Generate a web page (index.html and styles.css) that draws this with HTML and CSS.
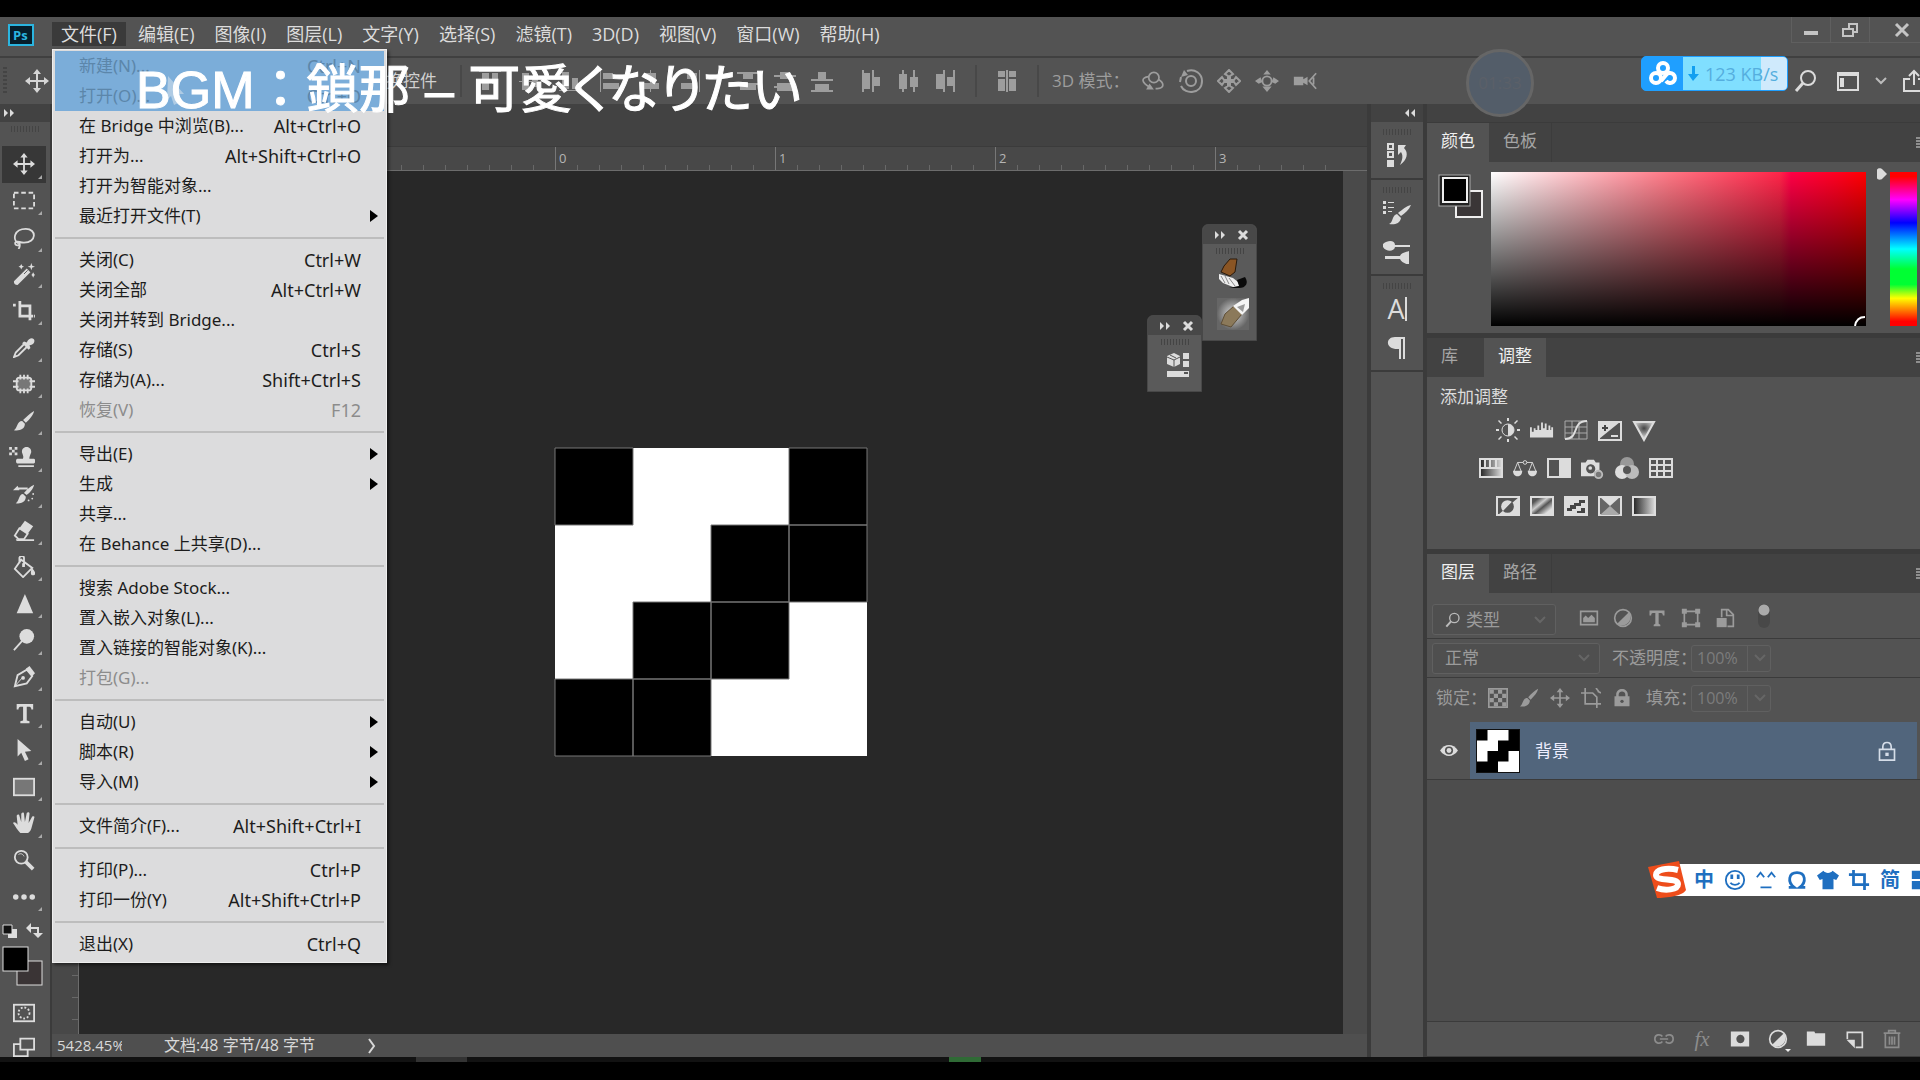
FILE: index.html
```html
<!DOCTYPE html>
<html lang="zh-CN">
<head>
<meta charset="utf-8">
<title>Photoshop</title>
<link rel="stylesheet" href="styles.css">
</head>
<body>
<svg class="defs" aria-hidden="true">
  <defs>
    <linearGradient id="gh"><stop offset="0" stop-color="#222"/><stop offset="1" stop-color="#ddd"/></linearGradient>
    <linearGradient id="gd" x1="0" y1="0" x2="1" y2="1"><stop offset=".2" stop-color="#555"/><stop offset=".4" stop-color="#ccc"/><stop offset=".55" stop-color="#555"/><stop offset=".8" stop-color="#ddd"/></linearGradient>
    <radialGradient id="gr" cy=".35"><stop offset="0" stop-color="#444"/><stop offset="1" stop-color="#ccc"/></radialGradient>
    <radialGradient id="glow"><stop offset="0" stop-color="#ddd"/><stop offset="1" stop-color="#666"/></radialGradient>
  </defs>
  <symbol id="i-move" viewBox="0 0 24 24"><path d="M12 0l4 5h-3v6h6V8l5 4-5 4v-3h-6v6h3l-4 5-4-5h3v-6H5v3l-5-4 5-4v3h6V5H8z"/></symbol>
  <symbol id="i-brush" viewBox="0 0 24 24"><path d="M23 1c-1 5-5 9-9 13l-3-3C15 7 19 3 23 1zM10 12l3 3c0 6-6 8-12 7 4-2 3-10 9-10z"/></symbol>
  <symbol id="i-crop" viewBox="0 0 24 24"><path d="M0 4h3v3H0zM6 1h3v15h13v3H6zM6 5h14v17h-3V8H6zM23 16h2v3h-2z"/></symbol>
  <symbol id="i-right" viewBox="0 0 12 8"><path d="M1 0l4 4-4 4zM7 0l4 4-4 4z"/></symbol>
  <symbol id="i-left" viewBox="0 0 12 8"><path d="M5 0L1 4l4 4zM11 0L7 4l4 4z"/></symbol>
  <symbol id="i-x" viewBox="0 0 12 12"><path d="M2 2l8 8M10 2l-8 8" stroke="currentColor" stroke-width="3" fill="none"/></symbol>
  <symbol id="i-chev" viewBox="0 0 12 8"><path d="M1 1l5 5 5-5" stroke="currentColor" stroke-width="2" fill="none"/></symbol>
  <symbol id="i-mag" viewBox="0 0 24 24"><g fill="none" stroke="currentColor"><circle cx="14" cy="9" r="7" stroke-width="2"/><path d="M9 14l-7 8" stroke-width="3"/></g></symbol>
  <symbol id="i-lock" viewBox="0 0 24 24"><path d="M3 10h2V8c0-9 14-9 14 0v2h2v12H3zM8 10h8V8c0-5-8-5-8 0z" fill-rule="evenodd"/><circle cx="12" cy="16" r="2" fill="#535353"/></symbol>
  <symbol id="i-half" viewBox="0 0 24 24"><circle cx="12" cy="12" r="10" fill="none" stroke="currentColor" stroke-width="2"/><path d="M19 5A10 10 0 0 1 5 19z"/></symbol>
  <symbol id="i-panel" viewBox="0 0 8 12"><path d="M0 1h8M0 4h8M0 7h8M0 10h8" stroke="currentColor"/></symbol>
</svg>

<header class="menubar">
  <svg class="pslogo" viewBox="0 0 26 22" role="img" aria-label="Photoshop"><rect x="1" y="1" width="24" height="20" fill="#061e2b" stroke="#2bb5e0" stroke-width="2"/><text x="5" y="16" class="pstext">Ps</text></svg>
  <nav class="menus" aria-label="主菜单">
    <div class="menuwrap">
      <button class="menu open">文件(F)</button>
      <ul class="dropdown" role="menu">
        <li><button class="item hot"><span>新建(N)...</span><kbd>Ctrl+N</kbd></button></li>
        <li><button class="item hot"><span>打开(O)...</span><kbd>Ctrl+O</kbd></button></li>
        <li><button class="item"><span>在 Bridge 中浏览(B)...</span><kbd>Alt+Ctrl+O</kbd></button></li>
        <li><button class="item"><span>打开为...</span><kbd>Alt+Shift+Ctrl+O</kbd></button></li>
        <li><button class="item"><span>打开为智能对象...</span></button></li>
        <li><button class="item sub"><span>最近打开文件(T)</span></button></li>
        <li class="sep"></li>
        <li><button class="item"><span>关闭(C)</span><kbd>Ctrl+W</kbd></button></li>
        <li><button class="item"><span>关闭全部</span><kbd>Alt+Ctrl+W</kbd></button></li>
        <li><button class="item"><span>关闭并转到 Bridge...</span></button></li>
        <li><button class="item"><span>存储(S)</span><kbd>Ctrl+S</kbd></button></li>
        <li><button class="item"><span>存储为(A)...</span><kbd>Shift+Ctrl+S</kbd></button></li>
        <li><button class="item" disabled><span>恢复(V)</span><kbd>F12</kbd></button></li>
        <li class="sep"></li>
        <li><button class="item sub"><span>导出(E)</span></button></li>
        <li><button class="item sub"><span>生成</span></button></li>
        <li><button class="item"><span>共享...</span></button></li>
        <li><button class="item"><span>在 Behance 上共享(D)...</span></button></li>
        <li class="sep"></li>
        <li><button class="item"><span>搜索 Adobe Stock...</span></button></li>
        <li><button class="item"><span>置入嵌入对象(L)...</span></button></li>
        <li><button class="item"><span>置入链接的智能对象(K)...</span></button></li>
        <li><button class="item" disabled><span>打包(G)...</span></button></li>
        <li class="sep"></li>
        <li><button class="item sub"><span>自动(U)</span></button></li>
        <li><button class="item sub"><span>脚本(R)</span></button></li>
        <li><button class="item sub"><span>导入(M)</span></button></li>
        <li class="sep"></li>
        <li><button class="item"><span>文件简介(F)...</span><kbd>Alt+Shift+Ctrl+I</kbd></button></li>
        <li class="sep"></li>
        <li><button class="item"><span>打印(P)...</span><kbd>Ctrl+P</kbd></button></li>
        <li><button class="item"><span>打印一份(Y)</span><kbd>Alt+Shift+Ctrl+P</kbd></button></li>
        <li class="sep"></li>
        <li><button class="item"><span>退出(X)</span><kbd>Ctrl+Q</kbd></button></li>
      </ul>
    </div>
    <button class="menu">编辑(E)</button>
    <button class="menu">图像(I)</button>
    <button class="menu">图层(L)</button>
    <button class="menu">文字(Y)</button>
    <button class="menu">选择(S)</button>
    <button class="menu">滤镜(T)</button>
    <button class="menu">3D(D)</button>
    <button class="menu">视图(V)</button>
    <button class="menu">窗口(W)</button>
    <button class="menu">帮助(H)</button>
  </nav>
  <div class="winctl">
    <button aria-label="最小化"><svg viewBox="0 0 16 16"><path d="M1 9h14v4H1z"/></svg></button>
    <button aria-label="还原"><svg viewBox="0 0 16 16"><path d="M6 1h10v10h-4v4H0V6h6zM8 3v3h4v3h2V3zM2 8v5h8V8z" fill-rule="evenodd"/></svg></button>
    <button class="close" aria-label="关闭"><svg viewBox="0 0 16 16"><path d="M2 2l12 12M14 2L2 14" stroke="currentColor" stroke-width="3"/></svg></button>
  </div>
</header>

<section class="options" aria-label="工具选项">
  <span class="grip-v"></span>
  <svg class="movebig"><use href="#i-move"/></svg>
  <label class="transform"><input type="checkbox">显示变换控件</label>
  <div class="group g1">
    <button aria-label="顶对齐"><svg viewBox="0 0 24 24"><path d="M1 2h22v1H1zM4 4h7v17H4zM14 4h6v11h-6z"/></svg></button>
    <button aria-label="垂直居中"><svg viewBox="0 0 24 24"><path d="M1 12h22v1H1zM4 4h7v17H4zM14 7h6v11h-6z"/></svg></button>
    <button aria-label="底对齐"><svg viewBox="0 0 24 24"><path d="M1 21h22v1H1zM4 3h7v17H4zM14 9h6v11h-6z"/></svg></button>
    <button aria-label="左对齐"><svg viewBox="0 0 24 24"><path d="M2 1h1v22H2zM5 4h10v6H5zM5 14h16v6H5z"/></svg></button>
    <button aria-label="水平居中"><svg viewBox="0 0 24 24"><path d="M12 1h1v22h-1zM7 4h11v6H7zM4 14h17v6H4z"/></svg></button>
    <button aria-label="右对齐"><svg viewBox="0 0 24 24"><path d="M21 1h1v22h-1zM9 4h10v6H9zM3 14h16v6H3z"/></svg></button>
  </div>
  <div class="group g2">
    <button aria-label="按顶分布"><svg viewBox="0 0 24 24"><path d="M1 3h22v2H1zM7 5h10v5H7zM1 14h22v2H1zM4 16h16v5H4z"/></svg></button>
    <button aria-label="垂直分布"><svg viewBox="0 0 24 24"><path d="M1 6h22v2H1zM7 3h10v7H7zM1 17h22v2H1zM4 14h16v8H4z"/></svg></button>
    <button aria-label="按底分布"><svg viewBox="0 0 24 24"><path d="M1 10h22v2H1zM8 3h8v7H8zM1 21h22v2H1zM5 15h14v6H5z"/></svg></button>
  </div>
  <div class="group g2b">
    <button aria-label="按左分布"><svg viewBox="0 0 24 24"><path d="M3 1h2v22H3zM5 4h6v16H5zM13 1h2v22h-2zM15 8h6v9h-6z"/></svg></button>
    <button aria-label="水平分布"><svg viewBox="0 0 24 24"><path d="M6 1h2v22H6zM3 5h8v15H3zM17 1h2v22h-2zM14 8h8v10h-8z"/></svg></button>
    <button aria-label="按右分布"><svg viewBox="0 0 24 24"><path d="M10 1h2v22h-2zM3 5h7v15H3zM20 1h2v22h-2zM14 8h6v9h-6z"/></svg></button>
  </div>
  <div class="group g3">
    <button aria-label="自动对齐图层"><svg viewBox="0 0 24 24"><path d="M3 2h7v6H3zM14 2h7v6h-7zM3 10h7v12H3zM14 10h7v12h-7zM11 1h2v22h-2z"/></svg></button>
  </div>
  <div class="group g4">
    <span class="modelabel">3D 模式：</span>
    <button aria-label="环绕"><svg viewBox="0 0 28 24"><g fill="none" stroke="currentColor" stroke-width="2"><circle cx="15" cy="8" r="6"/><path d="M9 7c-10 1-8 7 1 12M20 10c7 4 8 10-1 11h-2"/></g><path d="M6 22l4-7 5 7z"/></svg></button>
    <button aria-label="滚动"><svg viewBox="0 0 24 24"><g fill="none" stroke="currentColor" stroke-width="2"><circle cx="12" cy="12" r="5"/><path d="M8 2c8-3 15 3 15 10 0 13-17 14-21 5"/><path d="M1 13l1-5"/></g><path d="M2 8l3-7 4 5z"/></svg></button>
    <button aria-label="拖动"><svg viewBox="0 0 24 24"><path d="M12 1l4 4-3 2v4h4l2-3 4 4-4 4-2-3h-4v4l3 2-4 4-4-4 3-2v-4H7l-2 3-4-4 4-4 2 3h4V7L8 5z" fill="none" stroke="currentColor" stroke-width="2"/></svg></button>
    <button aria-label="滑动"><svg viewBox="0 0 26 24"><circle cx="13" cy="12" r="5" fill="none" stroke="currentColor" stroke-width="2"/><path d="M13 0l4 5H9zM13 24l-5-6h10zM0 12l6-4 2 5-4 2zM26 12l-6-4-2 5 4 2z"/></svg></button>
    <button aria-label="缩放"><svg viewBox="0 0 28 24"><path d="M1 7h11v3l5-3v10l-5-3v3H1z"/><path d="M27 3l-8 9 8 9M24 8v8" fill="none" stroke="currentColor" stroke-width="2"/></svg></button>
  </div>
  <div class="group g5">
    <button aria-label="搜索"><svg viewBox="0 0 24 24"><use href="#i-mag"/></svg></button>
    <button aria-label="工作区"><svg viewBox="0 0 24 24"><path d="M1 3h22v19H1zM3 7v13h18V7zM4 9h4v9H4z" fill-rule="evenodd"/></svg></button>
    <svg class="chev"><use href="#i-chev"/></svg>
    <button class="share" aria-label="共享"><svg viewBox="0 0 24 24"><path d="M8 10H2v12h20V10h-6M12 16V2M7 7l5-5 5 5" fill="none" stroke="currentColor" stroke-width="2"/></svg></button>
  </div>
</section>

<main class="workspace">
  <aside class="toolbar" aria-label="工具">
    <div class="dockhead"><svg class="arrows"><use href="#i-right"/></svg></div>
    <div class="gripbox"><span class="grip"></span></div>
    <div class="tools">
      <button class="tool active" aria-label="移动"><svg><use href="#i-move"/></svg></button>
      <button class="tool" aria-label="选框"><svg viewBox="0 0 24 24"><rect x="1" y="3" width="22" height="17" fill="none" stroke="currentColor" stroke-width="2" stroke-dasharray="5 3"/></svg></button>
      <button class="tool" aria-label="套索"><svg viewBox="0 0 24 24"><path d="M6 18C-1 14 1 2 14 2c12 0 12 15-2 15-4 0-5-1-7-1-4 0-3 4 0 4s3-4 0-4c3 1 3 5 1 8" fill="none" stroke="currentColor" stroke-width="2"/></svg></button>
      <button class="tool" aria-label="魔棒"><svg viewBox="0 0 24 24"><path d="M1 20L15 6l4 4L5 24c-3 0-4-1-4-4zM9 1l1 2 2 1-2 1-1 2-1-2-2-1 2-1zM20 0l1 3 3 1-3 1-1 3-1-3-3-1 3-1zM22 10l1 2 1 1-1 1-1 2-1-2-1-1 1-1z"/><path d="M12 12l4-4" stroke="#535353" stroke-width="1"/></svg></button>
      <button class="tool" aria-label="裁剪"><svg><use href="#i-crop"/></svg></button>
      <button class="tool" aria-label="吸管"><svg viewBox="0 0 24 24"><path d="M12 6l3 1c3-7 10-5 8 0-1 2-3 3-5 3l1 3-2 2-7-7z"/><path d="M12 9L3 18l-2 5 5-2 9-9" fill="none" stroke="currentColor" stroke-width="2"/></svg></button>
      <button class="tool" aria-label="修补"><svg viewBox="0 0 24 24"><rect x="4" y="5" width="16" height="14" rx="3" fill="#777" stroke="currentColor" stroke-width="2"/><path d="M8 2v5M12 2v5M16 2v5M8 17v5M12 17v5M16 17v5M0 9h6M0 15h6M18 9h6M18 15h6" stroke="currentColor" stroke-width="2"/></svg></button>
      <button class="tool" aria-label="画笔"><svg><use href="#i-brush"/></svg></button>
      <button class="tool wide" aria-label="图章"><svg viewBox="0 0 28 24"><path d="M14 7c-1-8 11-8 10 0-1 3-2 4-2 7h5c2 0 2 5 0 5H9c-2 0-2-5 0-5h6c1-3 0-4-1-7zM10 21h17v2H10zM0 1h3v3H0zM6 1h3v3H6zM3 4h3v3H3zM0 7h3v3H0zM6 7h3v3H6z"/></svg></button>
      <button class="tool" aria-label="历史记录画笔"><svg viewBox="0 0 24 24"><path d="M23 2c-1 5-5 9-8 11l-3-2c3-4 7-7 11-9zM11 12l3 3c0 6-6 8-11 7 4-2 3-10 8-10zM0 8l5-5 2 5zM5 5h11v2H5z"/><circle cx="17" cy="19" r="1"/><circle cx="21" cy="17" r="1"/><circle cx="22" cy="12" r="1"/></svg></button>
      <button class="tool" aria-label="橡皮擦"><svg viewBox="0 0 24 24"><path d="M13 2l9 6-6 8-9-6zM3 22h20v2H4z"/><path d="M7 10l9 6-4 6H6l-4-4z" fill="none" stroke="currentColor" stroke-width="2"/></svg></button>
      <button class="tool" aria-label="油漆桶"><svg viewBox="0 0 24 24"><path d="M9 4l12 9-10 10-9-9zM7 8V2c1-3 5-2 5 0v8" fill="none" stroke="currentColor" stroke-width="2"/><path d="M20 13c4 2 6 8 2 8s-2-4-2-8zM10 8h3v4h-3z"/></svg></button>
      <button class="tool" aria-label="锐化"><svg viewBox="0 0 24 24"><path d="M13 1l9 21H4z"/></svg></button>
      <button class="tool" aria-label="减淡"><svg viewBox="0 0 24 24"><circle cx="15" cy="8" r="8"/><path d="M10 13L1 23" stroke="currentColor" stroke-width="2"/></svg></button>
      <button class="tool" aria-label="钢笔"><svg viewBox="0 0 24 24"><path d="M2 22l3-12 10-6 6 7-6 8z" fill="none" stroke="currentColor" stroke-width="2"/><path d="M2 22l8-9" stroke="currentColor"/><circle cx="11" cy="13" r="2"/><path d="M14 3l4-3 6 8-3 3z"/></svg></button>
      <button class="tool" aria-label="文字"><svg viewBox="0 0 24 24"><path d="M4 1h18v6h-2c0-2-1-3-2-3h-3v15l3 1v2H8v-2l3-1V4H8C7 4 6 5 6 7H4z"/></svg></button>
      <button class="tool" aria-label="路径选择"><svg viewBox="0 0 24 24"><path d="M5 0l15 13-7 1 4 8-4 2-4-9-4 4z"/></svg></button>
      <button class="tool" aria-label="矩形"><svg viewBox="0 0 24 24"><rect x="1" y="3" width="22" height="18" fill="#777" stroke="currentColor" stroke-width="2"/></svg></button>
      <button class="tool" aria-label="抓手"><svg viewBox="0 0 24 24"><path d="M8 23c-3-3-5-7-8-11 1-2 4 0 5 2L4 4c1-2 3-1 3 0l2 7V2c1-2 3-2 3 0l1 9 2-10c1-1 3-1 3 1l-1 10 4-7c2-1 3 0 2 2l-3 11c-1 3-3 5-4 5z"/></svg></button>
      <button class="tool plain" aria-label="缩放"><svg viewBox="0 0 24 24"><circle cx="9" cy="9" r="7" fill="none" stroke="currentColor" stroke-width="2"/><path d="M14 14l8 8" stroke="currentColor" stroke-width="4"/><path d="M6 6c3-2 5 0 6 2" fill="none" stroke="currentColor"/></svg></button>
      <button class="tool" aria-label="更多"><svg viewBox="0 0 24 24"><circle cx="3" cy="12" r="3"/><circle cx="12" cy="12" r="3"/><circle cx="21" cy="12" r="3"/></svg></button>
    </div>
    <div class="swatchbox">
      <svg viewBox="0 0 50 66" class="swatches"><path d="M8 8h9v9H8z" fill="#ddd"/><path d="M3 4h9v9H3z" fill="#111" stroke="#ddd"/><path d="M30 7h8v7" fill="none" stroke="#ddd" stroke-width="2"/><path d="M31 2v10l-5-5zM33 12h10l-5 5z" fill="#ddd"/><rect x="17" y="40" width="25" height="24" fill="#3a3435" stroke="#ddd"/><rect x="3" y="26" width="25" height="24" fill="#000" stroke="#ddd"/></svg>
    </div>
    <button class="tool plain small" aria-label="快速蒙版"><svg viewBox="0 0 24 24"><rect x="1" y="3" width="22" height="18" fill="none" stroke="currentColor" stroke-width="2"/><circle cx="12" cy="12" r="6" fill="none" stroke="currentColor" stroke-width="2" stroke-dasharray="2 2"/></svg></button>
    <button class="tool plain last" aria-label="屏幕模式"><svg viewBox="0 0 24 24"><path d="M8 4h15v12H8zM8 10H1v13h15v-7" fill="none" stroke="currentColor" stroke-width="2"/></svg></button>
  </aside>

  <section class="doc">
    <div class="tabs-empty"></div>
    <div class="hruler"><span>0</span><span>1</span><span>2</span><span>3</span></div>
    <div class="stage">
      <div class="vruler"></div>
      <div class="canvas">
        <svg class="art" viewBox="0 0 312 308" role="img" aria-label="图像"><path fill="#fff" d="M0 0h312v308H0z"/><path d="M0 0h78v77H0zM234 0h78v77h-78zM156 77h78v77h-78zM234 77h78v77h-78zM78 154h78v77H78zM156 154h78v77h-78zM0 231h78v77H0zM78 231h78v77H78z" fill="#000" stroke="#777"/></svg>
        <div class="float f1">
          <div class="floathead"><svg class="arrows"><use href="#i-right"/></svg><button aria-label="关闭面板"><svg class="x"><use href="#i-x"/></svg></button></div>
          <span class="grip"></span>
          <button aria-label="笔刷"><svg viewBox="0 0 32 32"><path d="M7 8l6-7h7l-2 13-5 4-9-4z" fill="#8a5524" stroke="#2a1a0c"/><path d="M2 16l14 4 10 8-10 1-10-4-4-4z" fill="#eee"/><path d="M4 18l4 7M8 18l4 8M12 20l6 8" stroke="#888"/><path d="M20 22l8-3c4 6 1 11-6 11H12l10-2z" fill="#0a0a0a"/></svg></button>
          <button aria-label="刷子"><svg viewBox="0 0 32 32"><path fill="url(#glow)" d="M0 0h32v32H0z"/><path d="M17 8l8 8-11 13-10-3 4-10z" fill="#8b795a" stroke="#5e4e36"/><path d="M32 0v10l-7 7-9-9 9-6z" fill="#f4f4f4"/><path d="M20 9l8-3-2 8z" fill="#999"/></svg></button>
        </div>
        <div class="float f2">
          <div class="floathead"><svg class="arrows"><use href="#i-right"/></svg><button aria-label="关闭面板"><svg class="x"><use href="#i-x"/></svg></button></div>
          <span class="grip"></span>
          <button class="one" aria-label="3D"><svg viewBox="0 0 24 24"><path d="M1 3l7-3 6 3v8l-6 3-7-3z"/><path d="M1 4l7 3 6-3M8 7v7M4 2l6 3" fill="none" stroke="#555"/><path d="M17 0h6v6h-6zM17 8h6v6h-6zM1 18h22v6H1z"/><path d="M18 20h4" stroke="#555" stroke-width="2"/></svg></button>
        </div>
      </div>
      <div class="vscroll"></div>
    </div>
    <footer class="status"><span class="zoomval">5428.45%</span><span class="docinfo">文档:48 字节/48 字节</span><svg class="more" viewBox="0 0 8 16"><path d="M1 1l5 7-5 7" fill="none" stroke="currentColor" stroke-width="2"/></svg></footer>
  </section>

  <aside class="dock">
    <div class="dockhead right"><svg class="arrows"><use href="#i-left"/></svg></div>
    <div class="dockgroup"><span class="grip"></span>
      <button aria-label="历史记录"><svg viewBox="0 0 24 24"><path d="M2 0h7v7H2zM4 2v3h3V2zM2 8h7v7H2zM4 10v3h3v-3zM2 17h7v7H2zM13 2h8l-2 3c5 5 3 12-4 17 3-6 3-10 1-13l-3 3z" fill-rule="evenodd"/></svg></button></div>
    <div class="dockgroup"><span class="grip"></span>
      <button aria-label="画笔设置"><svg viewBox="0 0 28 24"><path d="M0 0h3v3H0zM5 1h6v1H5zM0 5h3v3H0zM5 6h6v1H5zM0 10h3v3H0zM5 10h4v1H5zM28 4c-2 5-6 8-10 11l-3-3c4-3 8-7 13-8zM14 13l4 4c-1 6-7 7-12 6 4-1 3-9 8-10z"/></svg></button>
      <button aria-label="画笔"><svg viewBox="0 0 28 24"><path d="M0 4c6-5 12-3 12 1h15v2H12c-1 5-9 5-12 0zM2 16h15c1-3 6-4 9-5v14c-3-1-8-3-9-6H2z"/></svg></button></div>
    <div class="dockgroup"><span class="grip"></span>
      <button class="charbtn" aria-label="字符">A<i></i></button>
      <button aria-label="段落"><svg viewBox="0 0 24 24"><path d="M20 1v22h-2V3h-2v20h-2V13C0 14 0 1 10 1z"/></svg></button></div>
    <div class="dockrest"></div>
  </aside>

  <aside class="panels">
    <div class="dockhead"></div>
    <section class="panel">
      <div class="tabs"><button class="tab on">颜色</button><button class="tab edge">色板</button><svg class="flyout"><use href="#i-panel"/></svg></div>
      <div class="colorbody">
        <svg class="fgbg" viewBox="0 0 46 46"><rect x="18" y="17" width="26" height="26" fill="#3a3637" stroke="#eee" stroke-width="2"/><rect x="1" y="1" width="31" height="31" fill="#222" stroke="#aaa"/><rect x="5" y="4" width="24" height="24" fill="#000" stroke="#eee" stroke-width="2"/></svg>
        <div class="field"><svg class="pick" viewBox="0 0 12 10"><path d="M1 10c1-6 4-9 10-9" fill="none" stroke="#fff" stroke-width="2"/></svg></div>
        <svg class="handle" viewBox="0 0 10 12"><path d="M0 2c0-2 4-2 5-1l5 5-5 5c-1 1-5 1-5-1z"/></svg>
        <div class="hue"></div>
      </div>
    </section>
    <section class="panel">
      <div class="tabs"><button class="tab first">库</button><button class="tab on">调整</button><svg class="flyout"><use href="#i-panel"/></svg></div>
      <div class="adjust">
        <p>添加调整</p>
        <div class="adjrow in">
          <button aria-label="亮度"><svg viewBox="0 0 24 24"><circle cx="12" cy="12" r="6" fill="none" stroke="currentColor"/><path d="M12 6a6 6 0 0 1 0 12zM11 0h2v3h-2zM11 21h2v3h-2zM0 11h3v2H0zM21 11h3v2h-3zM3 2l3 3-1 1-3-3zM21 2l1 1-3 3-1-1zM2 21l3-3 1 1-3 3zM22 21l-3-3-1 1 3 3z"/></svg></button>
          <button aria-label="色阶"><svg viewBox="0 0 26 24"><path d="M0 20V9h2v5h2v-4h2v2h2V7h2v5h2V4h2v6h2V5h2v7h2V7h2v5h1V9h2v11z"/></svg></button>
          <button aria-label="曲线"><svg viewBox="0 0 24 24"><path d="M1 3h22v18H1zM8 3v18M15 3v18M1 9h22M1 15h22" fill="none" stroke="#aaa"/><path d="M1 21c15 0 6-18 22-18" fill="none" stroke="#ddd" stroke-width="2"/></svg></button>
          <button aria-label="曝光度"><svg viewBox="0 0 24 24"><path d="M1 4h22v18H1z" fill="none" stroke="currentColor" stroke-width="2"/><path d="M1 21V4h21z"/><path d="M4 10h6M7 7v6" stroke="#444" stroke-width="2"/><path d="M13 18h7" stroke="#ddd" stroke-width="2"/></svg></button>
          <button aria-label="自然饱和度"><svg viewBox="0 0 24 24"><path d="M2 4h20L12 22z" fill="url(#gr)" stroke="#ddd" stroke-width="2"/></svg></button>
        </div>
        <div class="adjrow">
          <button aria-label="色相"><svg viewBox="0 0 24 24"><path d="M1 3h22v18H1z" fill="url(#gh)" stroke="#ddd" stroke-width="2"/><path d="M1 12h22M6 3v8M11 3v8M17 3v8" stroke="#ddd" stroke-width="2"/></svg></button>
          <button aria-label="色彩平衡"><svg viewBox="0 0 26 24"><path d="M5 6h16M5 6L1 16M5 6l4 10M21 6l-4 10M21 6l4 10" fill="none" stroke="currentColor"/><circle cx="13" cy="6" r="2" fill="#535353" stroke="currentColor"/><path d="M0 15h10c0 8-10 8-10 0zM16 15h10c0 8-10 8-10 0z"/></svg></button>
          <button aria-label="黑白"><svg viewBox="0 0 24 24"><path d="M1 3h22v18H1z" fill="none" stroke="currentColor" stroke-width="2"/><path d="M12 3h11v18H12z"/></svg></button>
          <button aria-label="照片滤镜"><svg viewBox="0 0 26 24"><path d="M0 6h5l2-3h7l2 3h4v10h-5l-1 5H0zM10 8a5 5 0 1 0 1 0z" fill-rule="evenodd"/><circle cx="10" cy="12" r="2"/><circle cx="19" cy="19" r="4" fill="#777" stroke="#bbb" stroke-width="2"/></svg></button>
          <button aria-label="通道混合器"><svg viewBox="0 0 24 24"><circle cx="12" cy="8" r="7" fill="#999"/><circle cx="7" cy="16" r="7" fill="#ddd"/><circle cx="17" cy="16" r="7" fill="#bbb"/><circle cx="12" cy="14" r="4" fill="#555"/></svg></button>
          <button aria-label="颜色查找"><svg viewBox="0 0 24 24"><path d="M1 3h22v18H1zM8 3v18M15 3v18M1 9h22M1 15h22" fill="#555" stroke="currentColor" stroke-width="2"/></svg></button>
        </div>
        <div class="adjrow in">
          <button aria-label="反相"><svg viewBox="0 0 24 24"><path d="M1 3h22v18H1z" fill="none" stroke="currentColor" stroke-width="2"/><path d="M2 21L23 3v18z"/><path d="M7 17a6 6 0 0 1 9-9z"/><path d="M7 17a6 6 0 0 0 9-9z" fill="#555"/></svg></button>
          <button aria-label="色调分离"><svg viewBox="0 0 24 24"><path d="M1 3h22v18H1z" fill="url(#gd)" stroke="#ddd" stroke-width="2"/></svg></button>
          <button aria-label="阈值"><svg viewBox="0 0 24 24"><path d="M1 3h22v18H1z" fill="#ddd" stroke="#ddd" stroke-width="2"/><path d="M3 14h3v-3h4V9h5V6h6v3h-4v3h-5v3H8v2H3zM10 19h3v-2h4v-3h4v5z" fill="#444"/></svg></button>
          <button aria-label="可选颜色"><svg viewBox="0 0 24 24"><path d="M1 3h22v18H1z" fill="#666" stroke="#ddd" stroke-width="2"/><path d="M2 3h20L12 12z" fill="#ddd"/><path d="M2 21h20l-10-9z" fill="#aaa"/></svg></button>
          <button aria-label="渐变映射"><svg viewBox="0 0 24 24"><path d="M1 3h22v18H1z" fill="url(#gh)" stroke="#ddd" stroke-width="2"/></svg></button>
        </div>
      </div>
    </section>
    <section class="panel grow">
      <div class="tabs"><button class="tab on">图层</button><button class="tab edge">路径</button><svg class="flyout"><use href="#i-panel"/></svg></div>
      <div class="lrow filter">
        <label class="selbox kind"><svg class="mag"><use href="#i-mag"/></svg><select aria-label="筛选类型"><option>类型</option></select><svg class="chev"><use href="#i-chev"/></svg></label>
        <div class="filters">
          <button aria-label="像素"><svg viewBox="0 0 24 24"><path d="M1 3h22v18H1zM3 5v14h18V5zM5 17v-5l3-3 3 3 4-4 4 4v5z" fill-rule="evenodd"/></svg></button>
          <button aria-label="调整"><svg><use href="#i-half"/></svg></button>
          <button aria-label="文字"><svg viewBox="0 0 24 24"><path d="M3 3h18v6h-2c0-2-1-3-2-3h-3v13l2 1v2H8v-2l2-1V6H7C6 6 5 7 5 9H3z"/></svg></button>
          <button aria-label="形状"><svg viewBox="0 0 24 24"><path d="M4 4h16v16H4z" fill="none" stroke="currentColor" stroke-width="2"/><path d="M1 1h6v6H1zM17 1h6v6h-6zM1 17h6v6H1zM17 17h6v6h-6z"/></svg></button>
          <button aria-label="智能对象"><svg viewBox="0 0 24 24"><path d="M8 11V2h8l6 6v14h-7M14 2v7h7" fill="none" stroke="currentColor" stroke-width="2"/><path d="M2 12h12v11H2z"/></svg></button>
        </div>
        <span class="toggle"></span>
      </div>
      <div class="lrow">
        <label class="selbox blend"><select aria-label="混合模式"><option>正常</option></select><svg class="chev"><use href="#i-chev"/></svg></label>
        <label class="pct" for="opacity">不透明度：</label>
        <span class="num"><input id="opacity" value="100%"><svg class="chev"><use href="#i-chev"/></svg></span>
      </div>
      <div class="lrow lockrow">
        <span class="locklabel">锁定：</span>
        <div class="locks">
          <button aria-label="锁定透明"><svg viewBox="0 0 24 24"><path d="M1 1h22v22H1z" fill="none" stroke="currentColor" stroke-width="2"/><path d="M2 2h5v5H2zM12 2h5v5h-5zM7 7h5v5H7zM17 7h5v5h-5zM2 12h5v5H2zM12 12h5v5h-5zM7 17h5v5H7zM17 17h5v5h-5z"/></svg></button>
          <button aria-label="锁定像素"><svg><use href="#i-brush"/></svg></button>
          <button aria-label="锁定位置"><svg><use href="#i-move"/></svg></button>
          <button aria-label="防止嵌套"><svg viewBox="0 0 24 24"><path d="M0 6h14l5 5v13M5 0v19h19M18 0l3 4M24 6l-4-2" fill="none" stroke="currentColor" stroke-width="2"/></svg></button>
          <button aria-label="锁定全部"><svg><use href="#i-lock"/></svg></button>
        </div>
        <label class="pct" for="fill">填充：</label>
        <span class="num"><input id="fill" value="100%"><svg class="chev"><use href="#i-chev"/></svg></span>
      </div>
      <div class="layer">
        <button class="eye" aria-label="可见性"><svg viewBox="0 0 24 16"><path d="M1 8c6-9 16-9 22 0-6 9-16 9-22 0z"/><circle cx="12" cy="8" r="5" fill="#535353"/><circle cx="12" cy="8" r="3"/></svg></button>
        <div class="layerbar">
          <svg class="thumb" viewBox="0 0 4 4"><path fill="#fff" d="M0 0h4v4H0z"/><path d="M0 0h1v1H0zM3 0h1v2H2V1h1zM1 2h1v0h1v0h-1V1h2v1H3v1H2v1H0V3h1z"/></svg>
          <span class="lname">背景</span>
          <svg class="llock" viewBox="0 0 24 24"><path d="M3 10h18v13H3zM7 10V7c0-7 10-7 10 0v3" fill="none" stroke="currentColor" stroke-width="2"/><path d="M10 14h4v4h-4z"/></svg>
        </div>
      </div>
      <div class="lempty"></div>
      <div class="lfoot">
        <button class="dim" aria-label="链接"><svg viewBox="0 0 24 24"><path d="M10 9c-2-3-9-3-9 3s7 6 9 3M14 9c2-3 9-3 9 3s-7 6-9 3M7 12h10" fill="none" stroke="currentColor" stroke-width="2"/></svg></button>
        <button class="dim fx" aria-label="图层样式">fx</button>
        <button aria-label="蒙版"><svg viewBox="0 0 24 24"><path d="M1 3h22v18H1zM12 7a5 5 0 1 0 1 0z" fill-rule="evenodd"/></svg></button>
        <button class="more-mark" aria-label="新建调整"><svg viewBox="0 0 24 24"><use href="#i-half"/></svg></button>
        <button aria-label="新建组"><svg viewBox="0 0 24 24"><path d="M1 3h9l1 2h12v15H1z"/></svg></button>
        <button aria-label="新建图层"><svg viewBox="0 0 24 24"><path d="M4 12V4h18v18h-8" fill="none" stroke="currentColor" stroke-width="2"/><path d="M3 13h10v10z"/></svg></button>
        <button class="dim" aria-label="删除"><svg viewBox="0 0 24 24"><path d="M2 5h20M8 5V2h8v3M4 6v16h16V6M9 9v10M12 9v10M15 9v10" fill="none" stroke="currentColor" stroke-width="2"/></svg></button>
      </div>
    </section>
  </aside>
</main>
<div class="taskstrip"><span class="t1"></span><span class="t2"></span></div>

<div class="recorder">01:33</div>

<div class="netdisk">
  <svg class="cloud" viewBox="0 0 28 24"><g fill="none" stroke="#fff" stroke-width="4"><circle cx="14" cy="7" r="5"/><circle cx="7" cy="17" r="5"/><path d="M17 20a5 5 0 1 0 0-6l-5 6"/></g></svg>
  <div class="speed"><svg class="down" viewBox="0 0 12 16"><path d="M5 0h3v8h4l-6 7-5-7h4z"/></svg>123 KB/s</div>
</div>

<div class="ime">
  <svg class="sogou" viewBox="0 0 40 40"><path d="M1 7L32 1l7 29c-3 6-20 8-29 8z" fill="#ee4d1b"/><path d="M31 10c-12-3-22 0-22 5 0 7 22 2 22 9 0 6-13 7-21 4" fill="none" stroke="#fff" stroke-width="6"/></svg>
  <b>中</b>
  <svg viewBox="0 0 24 24"><circle cx="12" cy="12" r="10" fill="none" stroke="currentColor" stroke-width="2"/><path d="M7 6h3v5H7zM14 6h3v5h-3z"/><path d="M7 15c2 3 8 3 10 0" fill="none" stroke="currentColor" stroke-width="2"/></svg>
  <svg viewBox="0 0 24 24"><path d="M2 9l4-5 4 5M14 9l4-5 4 5M6 20h12" fill="none" stroke="currentColor" stroke-width="2"/></svg>
  <svg viewBox="0 0 24 24"><path d="M3 20h6C1 14 3 4 12 4s11 10 3 16h6" fill="none" stroke="currentColor" stroke-width="3"/></svg>
  <svg viewBox="0 0 24 24"><path d="M7 2c2 3 8 3 10 0l7 5-3 5-3-1v11H6V11l-3 1-3-5z"/></svg>
  <svg viewBox="0 0 24 24"><path d="M1 6h17v17M6 1v16h17" fill="none" stroke="currentColor" stroke-width="3"/></svg>
  <b>简</b>
  <svg viewBox="0 0 24 24"><path d="M2 2h9v9H2zM13 2h9v9h-9zM2 13h9v9H2zM13 13h9v9h-9z"/></svg>
</div>

<svg class="cursor" viewBox="0 0 20 30"><path d="M2 0l16 18h-9l3 9-4 2-3-9-4 4z"/></svg>
<p class="caption" lang="ja">BGM：<span class="kana">鎖那 – 可愛くなりたい</span></p>
</body>
</html>
```
FILE: styles.css
```css
* { box-sizing: border-box; }
:root {
  --bg: #535353;
  --dark: #424242;
  --line: #3b3b3b;
  --icon: #dcdcdc;
  --dim: #9b9b9b;
}
body {
  margin: 0;
  min-height: 100vh;
  padding: 17px 0 18px;
  background: #000;
  color: var(--icon);
  font: 17px/24px "Open Sans", "Noto Sans CJK SC", sans-serif;
  display: flex;
  flex-direction: column;
  position: relative;
  overflow: hidden;
}
button, input, select { font: inherit; color: inherit; background: none; border: 0; padding: 0; margin: 0; }
button { display: grid; place-items: center; }
svg { display: block; fill: currentColor; }
.defs { position: absolute; width: 0; height: 0; }

/* menu bar */
.menubar { display: flex; height: 41px; background: var(--bg); border-bottom: 2px solid #404040; }
.pslogo { width: 26px; height: 22px; margin: 7px 18px 0 8px; }
.pstext { font: bold 13px "Open Sans", sans-serif; fill: #2bb5e0; }
.menus { display: flex; gap: 4px; padding-top: 5px; flex: 1; }
.menuwrap { position: relative; }
.menu { padding: 0 8px; height: 24px; font-size: 18px; line-height: 24px; white-space: nowrap; }
.menu.open { background: #3a3a3a; padding: 0 9px; }
.winctl { display: flex; height: 26px; border: 1px solid #5f5f5f; border-width: 0 0 1px 1px; color: #c4c4c4; }
.winctl button { width: 39px; border-right: 1px solid #5f5f5f; }
.winctl .close { width: 50px; border: 0; padding-left: 13px; }
.winctl svg { width: 16px; height: 16px; }

.dropdown {
  position: absolute; left: 0; top: 27px; z-index: 5;
  width: 335px; margin: 0; padding: 1px 2px 3px; list-style: none;
  background: #dcdcdd; border: 1px solid #eee; color: #1c1c1c;
  box-shadow: 2px 2px 3px rgba(0,0,0,.5);
  font-family: "Noto Sans", "Noto Sans CJK SC", sans-serif;
}
.item { display: flex; align-items: center; justify-content: space-between; width: 100%; height: 30px; padding: 0 23px 0 24px; white-space: nowrap; }
.item kbd { font: inherit; font-size: 18px; }
.item:disabled { color: #8c8c8c; }
.item.hot { background: #7badd9; color: #5c86aa; }
.item.sub::after { content: ""; border: 6px solid transparent; border-left: 8px solid #000; border-right: 0; margin-right: -17px; }
.sep { height: 14px; padding-top: 6px; }
.sep::after { content: ""; display: block; height: 2px; background: #bdbdbd; }

/* options bar */
.options { display: flex; align-items: center; height: 46px; background: var(--bg); color: #9d9d9d; padding-left: 3px; overflow: hidden; }
.options svg { width: 24px; height: 24px; }
.grip-v { width: 4px; height: 28px; background: repeating-linear-gradient(#444 0 2px, transparent 2px 4px); }
.options .movebig { margin-left: 18px; color: #d5d5d5; }
.transform { display: flex; align-items: center; margin-left: 268px; color: #d0d0d0; white-space: nowrap; }
.transform input { margin: 0 5px 0 0; }
.group { display: flex; align-items: center; height: 32px; }
.group button { width: 24px; height: 24px; }
.g1 { margin-left: 23px; padding-left: 16px; gap: 16px; border-left: 2px solid #484848; }
.g2 { margin-left: 16px; padding-left: 16px; gap: 13px; border-left: 2px solid #484848; }
.g2b { margin-left: 25px; gap: 13px; }
.g3 { margin-left: 18px; padding: 0 18px; border-left: 2px solid #484848; border-right: 2px solid #484848; }
.g4 { margin-left: 13px; gap: 14px; }
.modelabel { width: 75px; white-space: nowrap; }
.g5 { margin-left: auto; margin-right: -6px; gap: 18px; color: var(--icon); }
.g5 .chev { width: 12px; height: 8px; margin: 0 -3px; color: #bbb; }

/* workspace */
.workspace { flex: 1; min-height: 0; display: grid; grid-template-columns: 52px minmax(0, 1fr) 60px 493px; background: var(--bg); }
.dockhead { height: 18px; background: var(--dark); display: flex; align-items: center; padding-left: 3px; }
.arrows { width: 12px; height: 8px; }
.grip { display: block; width: 28px; height: 6px; margin: 0 auto; background: repeating-linear-gradient(90deg, #444 0 1px, transparent 1px 3px); }

.toolbar { display: flex; flex-direction: column; border-right: 2px solid var(--line); }
.gripbox { padding-top: 4px; height: 24px; }
.tools { flex: 1; display: grid; grid-auto-rows: 1fr; min-height: 0; }
.tool { position: relative; width: 48px; }
.tool svg { width: 22px; height: 22px; }
.tool.wide svg { width: 26px; margin-left: -4px; }
.tool.active { background: #373737; margin-left: 2px; width: 44px; }
.tool::after { content: ""; position: absolute; right: 6px; bottom: 4px; border: 2px solid transparent; border-right-color: #aaa; border-bottom-color: #aaa; }
.tool.active::after { right: 4px; }
.tool.plain::after { display: none; }
.tool.small { height: 36px; }
.tool.last { height: 26px; place-items: end center; }
.swatchbox { height: 80px; padding-top: 6px; }
.swatches { width: 50px; height: 66px; }

.doc { display: flex; flex-direction: column; min-width: 0; background: #4a4a4a; }
.tabs-empty { height: 42px; background: var(--dark); }
.hruler {
  height: 25px; display: flex; padding-left: 503px; overflow: hidden;
  border-top: 1px solid var(--line); border-bottom: 1px solid #6c6c6c; background-color: #484848;
  background-image: repeating-linear-gradient(90deg, #686868 0 1px, transparent 1px 22px);
  background-size: calc(100% - 42px) 5px; background-position: 19px 100%; background-repeat: no-repeat;
}
.hruler span { flex: none; width: 220px; padding-left: 3px; border-left: 1px solid #777; font-size: 13px; line-height: 22px; color: #b5b5b5; }
.stage { flex: 1; display: flex; min-height: 0; }
.vruler { width: 27px; border-right: 1px solid #6c6c6c; background: repeating-linear-gradient(#686868 0 1px, transparent 1px 22px) 100% 12px / 6px 100% no-repeat #484848; }
.canvas { flex: 1; position: relative; background: #282828; }
.vscroll { width: 24px; }
.art { position: absolute; left: 476px; top: 277px; width: 312px; height: 308px; overflow: visible; }
.float { position: absolute; width: 55px; background: #5a5a5a; border: 1px solid #484848; border-radius: 6px 6px 0 0; padding-bottom: 6px; }
.f1 { left: 1123px; top: 53px; }
.f2 { left: 1068px; top: 144px; }
.floathead { height: 19px; margin-bottom: 4px; padding: 0 7px 0 11px; background: #484848; display: flex; align-items: center; justify-content: space-between; border-radius: 5px 5px 0 0; }
.x { width: 12px; height: 12px; }
.float > button { width: 100%; height: 40px; padding-left: 6px; }
.float > button svg { width: 32px; height: 32px; }
.float > .one svg { width: 24px; height: 24px; }

.status { height: 23px; display: flex; align-items: center; line-height: 23px; color: #d8d8d8; background: #4f4f4f; }
.zoomval { width: 70px; padding-left: 5px; overflow: hidden; font-size: 15px; }
.docinfo { width: 246px; padding-left: 42px; font-size: 16px; white-space: nowrap; }
.more { width: 8px; height: 16px; }

.dock { display: flex; flex-direction: column; border: solid var(--line); border-width: 0 4px; }
.dockhead.right { justify-content: flex-end; padding-right: 7px; }
.dockgroup { border-bottom: 2px solid var(--line); padding: 7px 0 3px; }
.dockgroup button { width: 100%; height: 40px; }
.dockgroup:nth-of-type(n+3) button { height: 39px; }
.dockgroup svg { width: 28px; height: 24px; }
.dockgroup .charbtn { font-size: 27px; display: flex; justify-content: center; align-items: center; }
.charbtn i { width: 2px; height: 24px; background: currentColor; }
.dockrest { flex: 1; }

.panels { display: flex; flex-direction: column; min-width: 0; }
.panel { border-bottom: 4px solid var(--line); }
.panel.grow { flex: 1; display: flex; flex-direction: column; border-bottom: 1px solid var(--line); }
.tabs { display: flex; height: 40px; background: var(--dark); border-top: 1px solid var(--line); }
.tab { padding: 0 14px; color: #a5a5a5; line-height: 36px; place-items: start center; }
.tab.first { padding-right: 26px; }
.tab.on { background: var(--bg); color: #f0f0f0; }
.tab.edge { border-right: 1px solid #3c3c3c; }
.flyout { width: 8px; height: 12px; margin: 14px -4px 0 auto; }
.colorbody { display: flex; padding: 10px 3px 7px 11px; }
.fgbg { width: 46px; height: 46px; margin: 2px 7px 0 0; }
.field { position: relative; flex: 1; height: 154px; background: linear-gradient(to top, #000, transparent), linear-gradient(90deg, #fff 0, #ff7583 48%, #ff2549 77%, #ff0045 80%, #ff0020 92%, #f00 100%); }
.pick { position: absolute; right: 0; bottom: 0; width: 12px; height: 10px; }
.handle { width: 10px; height: 12px; margin: -4px 3px 0 11px; }
.hue { width: 27px; height: 154px; background: linear-gradient(#f00 3%, #f0f 18%, #00f 33%, #0ff 50%, #0f3 63%, #0f3 73%, #ff0 82%, #f00 97%); }
.adjust { padding: 8px 13px 24px; }
.adjust p { margin: 0 0 2px; }
.adjrow { display: flex; gap: 10px; height: 38px; align-items: center; padding-left: 39px; }
.adjrow.in { padding-left: 56px; }
.adjrow svg { width: 24px; height: 24px; }

.lrow { display: flex; align-items: center; height: 39px; padding-left: 5px; border-bottom: 1px solid var(--line); color: var(--dim); }
.filter { height: 46px; padding-top: 8px; }
.lockrow { border: 0; height: 44px; padding-bottom: 4px; }
.selbox { display: flex; align-items: center; height: 31px; border: 1px solid #606060; border-radius: 3px; padding: 0 9px 0 12px; background: #4f4f4f; }
.selbox select { appearance: none; flex: 1; min-width: 0; }
.kind { width: 124px; }
.blend { width: 168px; }
.chev { width: 12px; height: 8px; color: #666; }
.mag { width: 16px; height: 16px; margin-right: 5px; color: #bbb; }
.filters { display: flex; gap: 14px; padding: 0 0 4px 23px; }
.filters svg, .locks svg { width: 20px; height: 20px; }
.toggle { width: 12px; height: 24px; margin: -8px 0 0 23px; border-radius: 6px; background: radial-gradient(circle at 6px 6px, #aaa 5px, #484848 6px); }
.pct { width: 74px; white-space: nowrap; margin: 0 5px 0 12px; }
.num { display: flex; align-items: center; width: 80px; height: 27px; border: 1px solid #606060; border-radius: 3px; color: #7c7c7c; }
.num input { width: 56px; height: 25px; padding-left: 5px; font-size: 16px; border-right: 1px solid #606060; }
.num .chev { margin-left: 6px; }
.locklabel { width: 56px; padding-left: 4px; white-space: nowrap; }
.locks { display: flex; gap: 11px; }
.lockrow .pct { width: 40px; margin-left: 14px; }
.layer { display: flex; height: 58px; border-bottom: 1px solid var(--line); padding-right: 3px; }
.eye { width: 43px; }
.eye svg { width: 20px; height: 13px; }
.layerbar { flex: 1; display: flex; align-items: center; background: #51657c; padding: 0 20px 0 6px; color: #eef; }
.thumb { width: 44px; height: 44px; fill: #000; border: 1px solid #111; }
.lname { margin-left: 15px; flex: 1; }
.llock { width: 20px; height: 20px; color: #d5dde8; }
.lempty { flex: 1; background: #4d4d4d; }
.lfoot { height: 35px; border-top: 1px solid var(--line); display: flex; justify-content: flex-end; align-items: center; gap: 14px; padding-right: 16px; }
.lfoot button { width: 24px; position: relative; }
.lfoot svg { width: 20px; height: 20px; }
.more-mark::after { content: ""; position: absolute; right: -1px; bottom: -3px; border: 3px solid transparent; border-top-color: #eee; border-bottom: 0; }
.dim { color: #8c8c8c; }
.lfoot .fx { font: italic 21px/20px "Liberation Serif", serif; }

.taskstrip { height: 5px; display: flex; background: #121212; padding-left: 416px; }
.t1 { width: 51px; background: #333; }
.t2 { width: 32px; margin-left: 482px; background: #2f6a35; }

/* overlays floating above the application window */
.recorder { position: absolute; left: 1466px; top: 49px; width: 68px; height: 68px; border: 3px solid #666; border-radius: 50%; background: #535d69; color: #5b6068; text-align: center; line-height: 62px; }
.netdisk { position: absolute; right: 132px; top: 56px; width: 147px; height: 35px; display: flex; border: 1px solid #1f9fff; border-radius: 5px; overflow: hidden; background: #1f9fff; }
.cloud { width: 28px; height: 24px; margin: 4px 6px 0 7px; }
.speed { flex: 1; display: flex; align-items: center; gap: 6px; padding-left: 4px; background: linear-gradient(90deg, #80dfff 75%, #cfeafc 75%); color: #55aede; font-size: 18px; white-space: nowrap; }
.down { width: 12px; height: 16px; fill: #129ff0; flex: none; }
.ime { position: absolute; right: 0; top: 864px; width: 246px; height: 32px; display: flex; align-items: center; gap: 9px; background: #fff; color: #1f6fc0; clip-path: inset(-10px 0 -10px -40px); }
.ime svg { width: 22px; height: 22px; flex: none; }
.ime b { flex: none; width: 22px; font-size: 20px; font-weight: 700; text-align: center; }
.ime .sogou { width: 40px; height: 40px; margin: 0 -3px 0 -27px; }
.cursor { position: absolute; left: 166px; top: 76px; width: 20px; height: 30px; z-index: 6; fill: #c5d9ea; opacity: .7; }
.caption { position: absolute; left: 136px; top: 54px; margin: 0; z-index: 7; color: #fff; font: 52px/72px "Liberation Sans", "Noto Sans CJK JP", sans-serif; -webkit-text-stroke: 1px #fff; white-space: nowrap; }
.kana { font-feature-settings: "palt"; }
```
